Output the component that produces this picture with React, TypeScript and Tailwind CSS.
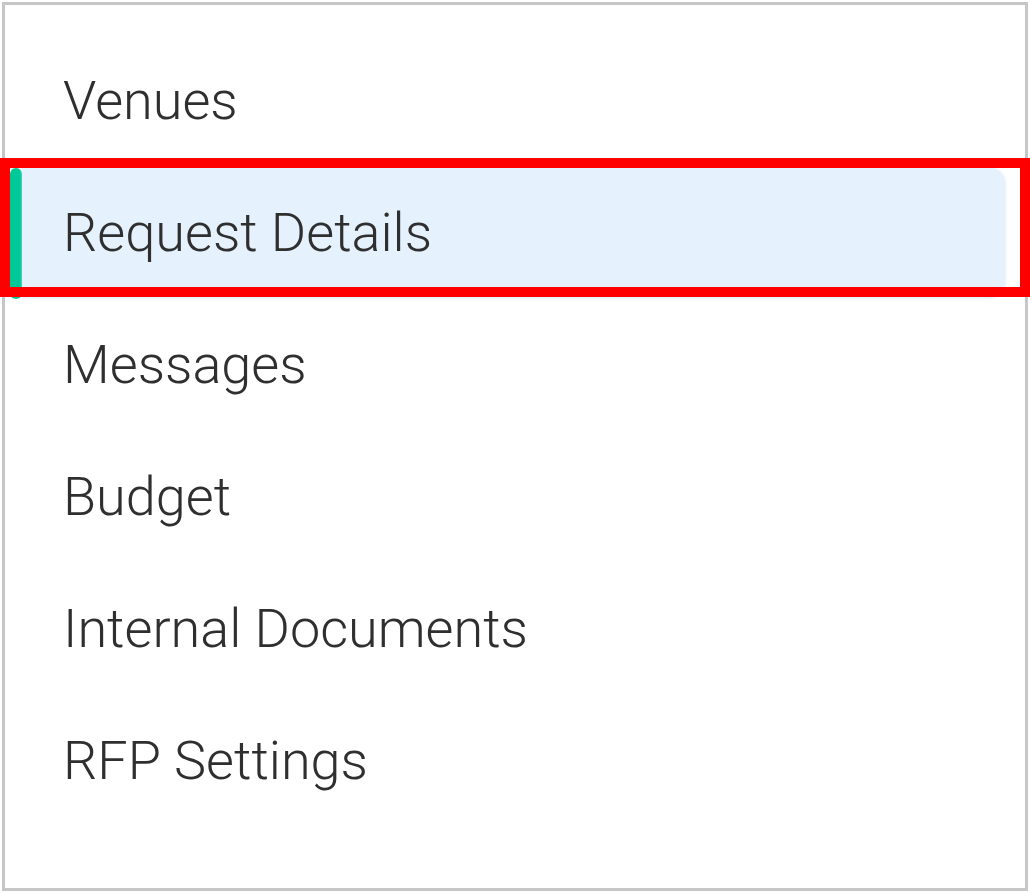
import React from 'react';

const items = ['Venues', 'Request Details', 'Messages', 'Budget', 'Internal Documents', 'RFP Settings'];

const App: React.FC = () => {
  const active = 'Request Details';

  return (
    <div className="relative w-[1030px] h-[893px] bg-white p-[2px] font-['Roboto',_'Liberation_Sans',_sans-serif]">
      <div className="h-full border-[3px] border-[#c6c6c6] pt-[31px] pl-[5px] pr-[20px]">
        <nav className="flex flex-col gap-[2px]">
          {items.map((item) => {
            const isActive = item === active;
            return (
              <div key={item} className="flex h-[130px]">
                <span className={isActive ? 'w-[12px] h-[131px] rounded-full bg-[#00c896]' : 'w-[12px]'} />
                <div
                  className={
                    isActive
                      ? 'flex flex-1 items-center pl-[41px] rounded-r-[16px] bg-[#e5f1fd] shadow-[0_0_3px_rgba(200,222,250,0.9)]'
                      : 'flex flex-1 items-center pl-[41px]'
                  }
                >
                  <span className="text-[54px] font-light leading-none text-[#2f2f2f]">{item}</span>
                </div>
              </div>
            );
          })}
        </nav>
      </div>

      {/* highlight annotation */}
      <div className="absolute left-0 top-[158px] w-[1030px] h-[139px] border-[10px] border-[#ff0000] pointer-events-none" />
    </div>
  );
};

export default App;
